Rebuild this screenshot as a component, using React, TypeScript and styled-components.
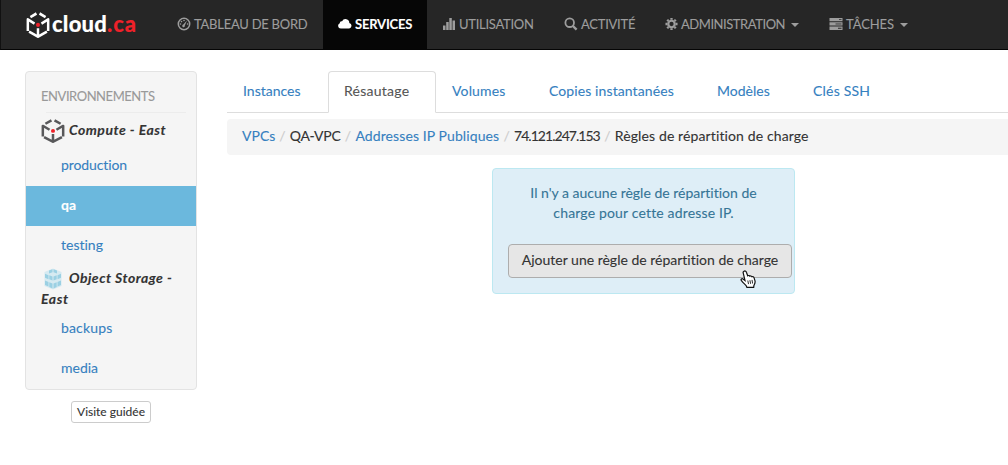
import React from "react";
import styled, { createGlobalStyle } from "styled-components";

const GlobalStyle = createGlobalStyle`
  * { box-sizing: border-box; }
  body {
    margin: 0;
    background: #fff;
    color: #333;
    font: 400 14px/20px Lato, "Liberation Sans", sans-serif;
    font-variant-ligatures: none;
    -webkit-text-stroke: 0.1px currentColor;
  }
`;

const Page = styled.div`
  position: relative;
  height: 465px;
  overflow: hidden;
`;

const Navbar = styled.header`
  display: flex;
  height: 50px;
  background: #262626;
  border-bottom: 1px solid #050505;
  border-left: 1px solid #111;
`;

const Brand = styled.a`
  display: flex;
  width: 161px;
  padding-left: 25px;
  align-items: center;
`;

const BrandName = styled.span`
  margin-left: 2px;
  color: #fff;
  font-size: 22px;
  font-weight: 900;
  line-height: 30px;
  letter-spacing: 0.2px;
  padding-bottom: 2px;
`;

const BrandSuffix = styled.span`
  color: #ee2129;
  letter-spacing: 1px;
`;

const Menu = styled.nav`
  display: flex;
`;

const MenuItem = styled.a<{ $width: number; $active?: boolean }>`
  display: flex;
  align-items: center;
  width: ${(p) => p.$width}px;
  height: 49px;
  padding: 0 0 1px 15px;
  background: ${(p) => (p.$active ? "#060606" : "transparent")};
  color: ${(p) => (p.$active ? "#fff" : "#9d9d9d")};
  font-size: 13px;
  font-weight: ${(p) => (p.$active ? 700 : 400)};
  white-space: nowrap;

  svg {
    flex: none;
    margin-right: 3px;
  }
`;

const Label = styled.span<{ $track?: number }>`
  letter-spacing: ${(p) => p.$track ?? 0}px;
`;

const Caret = styled.span`
  margin: 2px 0 0 6px;
  border: 4px solid transparent;
  border-top-color: currentColor;
  border-bottom: 0;
`;

const Body = styled.div`
  display: flex;
  padding: 21px 0 0 25px;
`;

const SideColumn = styled.aside`
  display: flex;
  flex-direction: column;
  align-items: center;
  width: 172px;
  margin-right: 30px;
`;

const Sidebar = styled.div`
  width: 172px;
  height: 319px;
  background: #f5f5f5;
  border: 1px solid #e3e3e3;
  border-radius: 4px;
`;

const SideTitle = styled.div`
  height: 40px;
  padding-left: 15px;
  color: #999;
  font-size: 13px;
  line-height: 48px;
`;

const Divider = styled.div`
  height: 1px;
  margin: 0 10px 0 20px;
  background: #ececec;
`;

const Group = styled.div<{ $height: number; $top: number }>`
  height: ${(p) => p.$height}px;
  padding: ${(p) => p.$top}px 5px 0 15px;
  font-size: 14px;
  font-style: italic;
  font-weight: 700;
  line-height: 21px;
`;

const GroupLine = styled.div`
  display: flex;
  height: 21px;
  white-space: nowrap;

  svg {
    flex: none;
    margin-right: 4px;
  }
`;

const Environment = styled.a<{ $active?: boolean }>`
  display: block;
  height: 40px;
  padding-left: 35px;
  line-height: 38px;
  color: ${(p) => (p.$active ? "#fff" : "#3580c0")};
  background: ${(p) => (p.$active ? "#6bb8dd" : "transparent")};
  font-weight: ${(p) => (p.$active ? 700 : 400)};
`;

const TourButton = styled.button`
  width: 80px;
  height: 22px;
  margin-top: 11px;
  padding: 0;
  background: #fff;
  border: 1px solid #ccc;
  border-radius: 3px;
  color: #333;
  font: 400 12px/18px Lato, sans-serif;
`;

const Main = styled.main`
  flex: 1;
  display: flex;
  flex-direction: column;
`;

const Tabs = styled.div`
  display: flex;
  height: 42px;
  border-bottom: 1px solid #ddd;
`;

const Tab = styled.a<{ $width: number; $active?: boolean }>`
  width: ${(p) => p.$width}px;
  height: 42px;
  padding-left: 15px;
  border: 1px solid ${(p) => (p.$active ? "#ddd" : "transparent")};
  border-bottom-color: ${(p) => (p.$active ? "#fff" : "transparent")};
  border-radius: 4px 4px 0 0;
  color: ${(p) => (p.$active ? "#555" : "#3580c0")};
  line-height: 38px;
  white-space: nowrap;
`;

const Breadcrumb = styled.div`
  display: flex;
  height: 36px;
  margin-top: 6px;
  padding-left: 15px;
  background: #f5f5f5;
  border-radius: 4px 0 0 4px;
  line-height: 34px;
  white-space: nowrap;
`;

const Crumb = styled.span<{ $width: number; $link?: boolean; $track?: number }>`
  width: ${(p) => p.$width}px;
  color: ${(p) => (p.$link ? "#3580c0" : "#333")};
  letter-spacing: ${(p) => p.$track ?? 0}px;
`;

const Slash = styled.span`
  width: 14.7px;
  color: #ccc;
  text-align: center;
`;

const Notice = styled.section`
  width: 303px;
  height: 126px;
  margin: 13px 0 0 265px;
  padding: 14px 15px;
  background: #deeef7;
  border: 1px solid #bce8f1;
  border-radius: 4px;
  color: #357596;
  text-align: center;
  white-space: nowrap;
`;

const AddButton = styled.button`
  display: block;
  position: relative;
  width: 284px;
  height: 34px;
  margin-top: 21px;
  padding: 0 0 2px;
  background: #e6e6e6;
  border: 1px solid #adadad;
  border-radius: 4px;
  color: #333;
  font: 400 14px/20px Lato, sans-serif;
  font-variant-ligatures: none;
`;

const Pointer = styled.svg`
  position: absolute;
  left: 231px;
  top: 25px;
`;

const CubeLogo = ({ color, size, height }: { color: string; size: number; height: number }) => (
  <svg width={size} height={height} viewBox="0 0 25 26" preserveAspectRatio="none" fill="none">
    <g stroke={color} strokeWidth="2.6">
      <path d="M10.900 1.500 4.600 5.100M14.100 1.500l6.300 3.600" />
      <path d="M1.900 19V7.400l7 4.200M23.100 19V7.400l-7 4.200" strokeLinejoin="round" />
      <path d="M3.200 19.600 12.500 24.700l9.300-5.100M12.500 16.300V24" />
    </g>
    <circle cx="12.5" cy="12.900" r="2.100" fill="#ee2129" />
  </svg>
);

const StorageIcon = () => (
  <svg width="24" height="24" viewBox="0 0 24 24">
    <path d="M12 1.5 20.5 5v14L12 22.5 3.500 19V5z" fill="#d6eaf1" />
    <g fill="#9bd0e3">
      <path d="M8 3.5l3.500-1.200v3L8 6.500zM16 3.500l-3.500-1.200v3L16 6.500z" />
      <path d="M4 6.800l3.500 1.400v4L4 10.800zM8.300 8.300l3.200 1.200v4l-3.200-1.200zM20 6.800l-3.500 1.400v4l3.500-1.400zM15.700 8.300l-3.200 1.200v4l3.200-1.200z" />
      <path d="M4 13.600l3.500 1.400v4.500L4 18zM8.300 15.200l3.200 1.200v5l-3.200-1.400zM20 13.600 16.500 15v4.500L20 18zM15.700 15.200l-3.200 1.200v5l3.200-1.400z" />
    </g>
  </svg>
);

const GaugeIcon = () => (
  <svg width="14" height="14" viewBox="0 0 14 14">
    <circle cx="7" cy="7" r="5.700" fill="none" stroke="currentColor" strokeWidth="1.500" />
    <path d="M10 3.500 7.800 8.500a1.300 1.300 0 1 1-1.500-.9z" fill="currentColor" />
    <g fill="currentColor">
      <circle cx="3.500" cy="7" r=".8" />
      <circle cx="4.500" cy="4.600" r=".8" />
      <circle cx="7" cy="3.500" r=".8" />
      <circle cx="10.600" cy="7" r=".8" />
    </g>
  </svg>
);

const CloudIcon = () => (
  <svg width="14" height="14" viewBox="0 0 14 14">
    <path d="M2.700 11.500a2.700 2.700 0 0 1-.9-5.200A2 2 0 0 1 4.100 4.200 3.800 3.800 0 0 1 11.300 6 2.800 2.800 0 0 1 11.200 11.500z" fill="currentColor" />
  </svg>
);

const BarsIcon = () => (
  <svg width="14" height="14" viewBox="0 0 14 14">
    <path d="M1 8.500h2.500V13H1zM4.200 5h2.500v8H4.200zM7.300 1h2.500v12H7.300zM10.500 3.500H13V13h-2.500z" fill="currentColor" />
  </svg>
);

const SearchIcon = () => (
  <svg width="14" height="14" viewBox="0 0 14 14" fill="none" stroke="currentColor">
    <circle cx="5.700" cy="5.700" r="4.300" strokeWidth="1.800" />
    <path d="M8.900 9l3.700 3.700" strokeWidth="2.400" />
  </svg>
);

const GearIcon = () => (
  <svg width="13" height="14" viewBox="0 0 14 14">
    <circle cx="7" cy="7" r="3.500" fill="none" stroke="currentColor" strokeWidth="2.400" />
    <g stroke="currentColor" strokeWidth="2.500">
      <path d="M7 .5v2M7 11.500v2M.5 7h2M11.500 7h2M2.400 2.400l1.400 1.400M10.200 10.200l1.400 1.400M2.400 11.600l1.400-1.400M10.200 3.800l1.400-1.400" />
    </g>
  </svg>
);

const TasksIcon = () => (
  <svg width="14" height="14" viewBox="0 0 14 14">
    <path d="M.5 1h13v3.300H.5zM.5 5.300h13v3.300H.5zM.5 9.600h13v3.300H.5z" fill="currentColor" />
    <path d="M10 2.200h2.500v.9H10zM9 10.800h3.500v.9H9z" fill="#262626" />
    <path d="M6.500 6.200h6v1.500h-6z" fill="#5c5c5c" />
  </svg>
);

const HandPointer = () => (
  <Pointer width="17" height="19" viewBox="0 0 17 19">
    <path
      d="M4.300 1.100c1-.4 1.800.2 2.100 1.100l1.300 3.600c.9-.6 1.700-.3 2.100.4.8-.5 1.700-.2 2.100.6 1-.4 1.800.1 2.200 1.100l.9 3c.5 2-.4 3.200-1.100 4.500l-.2 1.900H6.900l-.8-1.700C4.600 13.900 3 12.900 1.300 10.400c-.7-1.100.5-2.200 1.700-1.500l2 1.500L3.200 2.900c-.3-.8.200-1.500 1.100-1.800z"
      fill="#fff"
      stroke="#111"
      strokeWidth="1.200"
    />
    <path d="M7.800 10.500l.7 3.600M9.900 10.200l.7 3.600M12 9.900l.6 3.600" stroke="#111" strokeWidth=".9" />
  </Pointer>
);

export default function App() {
  return (
    <Page>
      <GlobalStyle />
      <Navbar>
        <Brand>
          <CubeLogo color="#fff" size={24} height={26} />
          <BrandName>
            cloud<BrandSuffix>.ca</BrandSuffix>
          </BrandName>
        </Brand>
        <Menu>
          <MenuItem $width={161}>
            <GaugeIcon />
            <Label $track={-0.25}>TABLEAU DE BORD</Label>
          </MenuItem>
          <MenuItem $width={104} $active>
            <CloudIcon />
            <Label $track={-0.2}>SERVICES</Label>
          </MenuItem>
          <MenuItem $width={122}>
            <BarsIcon />
            <Label $track={-0.28}>UTILISATION</Label>
          </MenuItem>
          <MenuItem $width={101}>
            <SearchIcon />
            <Label $track={-0.25}>ACTIVITÉ</Label>
          </MenuItem>
          <MenuItem $width={164}>
            <GearIcon />
            <Label $track={-0.45}>ADMINISTRATION</Label>
            <Caret />
          </MenuItem>
          <MenuItem $width={109}>
            <TasksIcon />
            <Label $track={-0.1}>TÂCHES</Label>
            <Caret />
          </MenuItem>
        </Menu>
      </Navbar>
      <Body>
        <SideColumn>
          <Sidebar>
            <SideTitle>
              <Label $track={-0.45}>ENVIRONNEMENTS</Label>
            </SideTitle>
            <Divider />
            <Group $height={33} $top={6}>
              <GroupLine>
                <CubeLogo color="#58585a" size={24} height={24} />
                <Label $track={0.5}>Compute - East</Label>
              </GroupLine>
            </Group>
            <Environment>
              <Label $track={-0.1}>production</Label>
            </Environment>
            <Environment $active>qa</Environment>
            <Environment>testing</Environment>
            <Group $height={43} $top={1}>
              <GroupLine>
                <StorageIcon />
                <Label $track={0.48}>Object Storage -</Label>
              </GroupLine>
              <GroupLine>
                <Label $track={0.6}>East</Label>
              </GroupLine>
            </Group>
            <Environment>
              <Label $track={0.15}>backups</Label>
            </Environment>
            <Environment>media</Environment>
          </Sidebar>
          <TourButton>Visite guidée</TourButton>
        </SideColumn>
        <Main>
          <Tabs>
            <Tab $width={101}>Instances</Tab>
            <Tab $width={108} $active>
              <Label $track={0.25}>Résautage</Label>
            </Tab>
            <Tab $width={97}>
              <Label $track={0.15}>Volumes</Label>
            </Tab>
            <Tab $width={168}>
              <Label $track={0.1}>Copies instantanées</Label>
            </Tab>
            <Tab $width={96}>Modèles</Tab>
            <Tab $width={90}>
              <Label $track={0.2}>Clés SSH</Label>
            </Tab>
          </Tabs>
          <Breadcrumb>
            <Crumb $width={33} $link>VPCs</Crumb>
            <Slash>/</Slash>
            <Crumb $width={51} $track={-0.25}>QA-VPC</Crumb>
            <Slash>/</Slash>
            <Crumb $width={144} $link $track={0.1}>Addresses IP Publiques</Crumb>
            <Slash>/</Slash>
            <Crumb $width={86} $track={-0.97}>74.121.247.153</Crumb>
            <Slash>/</Slash>
            <Crumb $width={194} $track={0.12}>Règles de répartition de charge</Crumb>
          </Breadcrumb>
          <Notice>
            <div>Il n'y a aucune règle de répartition de</div>
            <Label $track={0.16}>charge pour cette adresse IP.</Label>
            <AddButton>
              Ajouter une règle de répartition de charge
              <HandPointer />
            </AddButton>
          </Notice>
        </Main>
      </Body>
    </Page>
  );
}
